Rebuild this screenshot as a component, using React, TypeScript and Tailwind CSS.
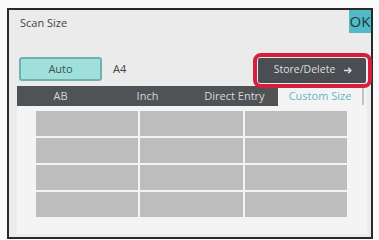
import React from 'react'

const tabs = ['AB', 'Inch', 'Direct Entry']

function App() {
  return (
    <div className="w-[379px] h-[240px] bg-[#fafafa] pl-[7px] pt-[8px] font-['Open_Sans',sans-serif]">
      <div className="w-[366px] h-[231px] border-2 border-[#2a2a2a] bg-[#ebebeb] flex flex-col">
        <div className="flex h-[24px] items-start">
          <div className="pl-[11px] pt-[6px] text-[11px] leading-[14px] text-[#444]">Scan Size</div>
          <div className="ml-auto w-[22px] h-[23px] bg-[#52b9c7] text-[#1d3c44] text-[15px] leading-[23px] text-center">OK</div>
        </div>

        <div className="flex items-center mt-[23px] h-[24px] pl-[10px]">
          <div className="w-[83px] h-[24px] rounded-[3px] border-2 border-[#6fb1ac] bg-[#9fe0da] text-[11px] text-[#445050] flex items-center justify-center">
            Auto
          </div>
          <div className="ml-[11px] text-[11px] text-[#444]">A4</div>
          <div className="relative ml-auto mr-[5px] mt-[2px]">
            <div className="w-[108px] h-[25px] bg-[#4a4d52] rounded-[2px] flex items-center justify-center gap-[9px] pl-[2px] text-[10.5px] text-[#dedede]">
              <span>Store/Delete</span>
              <svg width="8" height="7" viewBox="0 0 8 7" fill="none" stroke="#dedede" strokeWidth="1.3">
                <path d="M0 3.5h7M4.2 0.8L7 3.5L4.2 6.2" />
              </svg>
            </div>
            <div className="absolute -left-[5px] -top-[5px] w-[119px] h-[35px] rounded-[8px] border-[4px] border-[#d41f3f]"></div>
          </div>
        </div>

        <div className="ml-[8px] mt-[5px] w-[350px] flex h-[20px]">
          {tabs.map((t) => (
            <div key={t} className="w-[87px] bg-[#505356] text-[#d6d6d6] text-[11px] flex items-center justify-center">
              {t}
            </div>
          ))}
          <div className="w-[84px] bg-[#f4f4f4] text-[#62b6c6] text-[11px] flex items-center justify-center">Custom Size</div>
          <div className="w-[5px] bg-[#f4f4f4] flex justify-start">
            <div className="w-[2px] h-[18px] mt-[1px] bg-[#c4c4c4]"></div>
          </div>
        </div>

        <div className="ml-[8px] w-[350px] h-[128px] bg-[#f4f4f4] pt-[5px] pl-[19px]">
          <div className="w-[311px] grid grid-cols-3 gap-[2px]">
            {Array.from({ length: 12 }).map((_, i) => (
              <div key={i} className="h-[25px] bg-[#bdbdbd]"></div>
            ))}
          </div>
        </div>
      </div>
    </div>
  )
}

export default App
